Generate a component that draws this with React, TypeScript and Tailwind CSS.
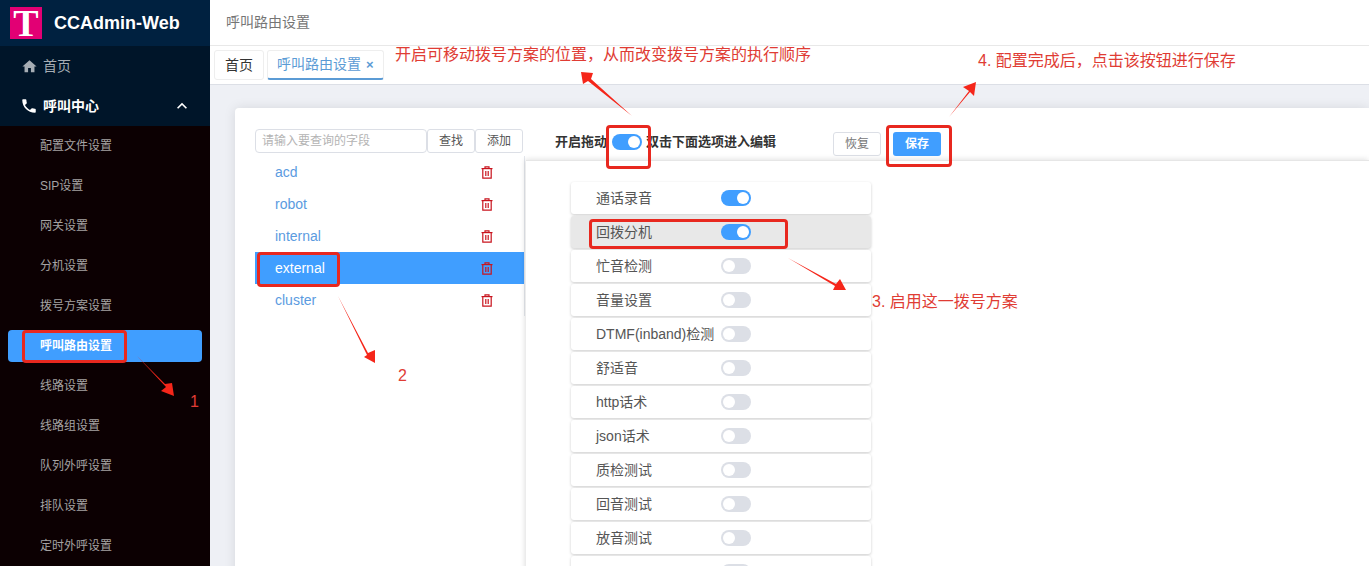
import React from "react";
import { MdHome, MdPhone, MdKeyboardArrowUp } from "react-icons/md";

const subMenus = [
  "配置文件设置",
  "SIP设置",
  "网关设置",
  "分机设置",
  "拨号方案设置",
  "呼叫路由设置",
  "线路设置",
  "线路组设置",
  "队列外呼设置",
  "排队设置",
  "定时外呼设置",
];

const routes = ["acd", "robot", "internal", "external", "cluster"];

const options = [
  { name: "通话录音", on: true },
  { name: "回拨分机", on: true, hover: true },
  { name: "忙音检测" },
  { name: "音量设置" },
  { name: "DTMF(inband)检测" },
  { name: "舒适音" },
  { name: "http话术" },
  { name: "json话术" },
  { name: "质检测试" },
  { name: "回音测试" },
  { name: "放音测试" },
  { name: "" },
];

const Switch = ({ on }: { on?: boolean }) => (
  <span
    className={`flex items-center w-[30px] h-[16px] shrink-0 rounded-full ${
      on ? "bg-[#409eff] justify-end" : "bg-[#dcdfe6] justify-start"
    }`}
  >
    <span className="w-[12px] h-[12px] mx-[2px] rounded-full bg-white" />
  </span>
);

const TrashIcon = () => (
  <svg width="12" height="13" viewBox="0 0 12 13" fill="none" stroke="#c9151e" strokeWidth="1.2">
    <path d="M0.5 2.6H11.5" />
    <path d="M4 2.4V0.9H8V2.4" />
    <path d="M1.8 2.6V12.2H10.2V2.6" />
    <path d="M4.8 5V10M7.2 5V10" />
  </svg>
);

// red marks drawn over the page
const Mark = ({ className }: { className: string }) => (
  <div className={`absolute border-[3px] border-[#e8281f] rounded-[4px] pointer-events-none ${className}`} />
);

const Note = ({ className, children }: { className: string; children: React.ReactNode }) => (
  <div className={`absolute text-[16px] leading-[22px] text-[#e03c34] whitespace-nowrap ${className}`}>{children}</div>
);

const App = () => {
  return (
    <div
      className="relative flex w-[1369px] h-[566px] overflow-hidden bg-[#eef0f5]"
      style={{ fontFamily: '"Liberation Sans", "Noto Sans CJK SC", sans-serif' }}
    >
      {/* sidebar */}
      <div className="w-[210px] shrink-0 flex flex-col bg-[#0c0002]">
        <div className="h-[46px] flex items-center pl-[10px] bg-[#002140]">
          <div
            className="w-[32px] h-[32px] bg-[#e20074] text-white text-[38px] leading-[33px] text-center font-bold"
            style={{ fontFamily: '"Liberation Serif", serif' }}
          >
            T
          </div>
          <span className="ml-[12px] text-[18px] font-bold text-white">CCAdmin-Web</span>
        </div>
        <div className="bg-[#001529]">
          <div className="h-[40px] flex items-center pl-[21px] text-[14px] text-[#a6adb4]">
            <MdHome className="w-[17px] h-[17px] mr-[5px] text-[#a6adb4]" />
            首页
          </div>
          <div className="h-[40px] flex items-center pl-[20px] pr-[18px] text-[14px] font-bold text-white">
            <MdPhone className="w-[18px] h-[18px] mr-[5px]" />
            <span className="flex-1">呼叫中心</span>
            <MdKeyboardArrowUp className="w-[20px] h-[20px]" />
          </div>
        </div>
        <div className="flex flex-col">
          {subMenus.map((m) =>
            m === "呼叫路由设置" ? (
              <div
                key={m}
                className="h-[32px] my-[4px] mx-[8px] pl-[32px] flex items-center rounded-[4px] bg-[#409eff] text-[12px] font-bold text-white"
              >
                {m}
              </div>
            ) : (
              <div key={m} className="h-[40px] pl-[40px] flex items-center text-[12px] text-[#a5a3a3]">
                {m}
              </div>
            )
          )}
        </div>
      </div>

      {/* main */}
      <div className="flex-1 min-w-0 flex flex-col">
        <div className="h-[46px] shrink-0 pl-[16px] flex items-center bg-white border-b border-[#e8e8e8] text-[14px] text-[#757575]">
          呼叫路由设置
        </div>
        <div className="h-[39px] shrink-0 pl-[4px] pt-[4px] flex gap-[3px] bg-white border-b border-[#dcdfe6] text-[14px]">
          <div className="w-[50px] h-[30px] flex items-center justify-center border border-[#eeeeee] rounded-[3px] text-[#333]">
            首页
          </div>
          <div className="w-[117px] h-[30px] pl-[9px] flex items-center border border-[#eeeeee] border-b-[2px] border-b-[#5b9bd5] rounded-[3px] text-[#5b9bd5]">
            呼叫路由设置
            <span className="ml-[5px] text-[13px] font-bold">×</span>
          </div>
        </div>

        <div className="flex-1 min-h-0 pl-[25px] pt-[23px]">
          <div className="h-[500px] flex flex-col bg-white rounded-l-[4px] shadow-[0_0_12px_rgba(0,0,0,0.1)]">
            <div className="flex h-[500px]">
              {/* route list */}
              <div className="w-[291px] shrink-0 pl-[20px] pt-[21px]">
                <div className="flex h-[24px]">
                  <div className="w-[172px] pl-[6px] flex items-center border border-[#dcdfe6] rounded-[4px] text-[12px] text-[#b4b4b4]">
                    请输入要查询的字段
                  </div>
                  <div className="w-[48px] flex items-center justify-center border border-[#dcdfe6] rounded-[3px] text-[12px] text-[#555]">
                    查找
                  </div>
                  <div className="w-[48px] flex items-center justify-center border border-[#dcdfe6] rounded-[3px] text-[12px] text-[#555]">
                    添加
                  </div>
                </div>
                <div className="mt-[3px] w-[270px] border-r border-[#e4e7ed]">
                  {routes.map((r) => (
                    <div
                      key={r}
                      className={`h-[32px] pl-[20px] pr-[31px] flex items-center justify-between text-[14px] ${
                        r === "external" ? "bg-[#409eff] text-white" : "text-[#5b9bdf]"
                      }`}
                    >
                      {r}
                      <TrashIcon />
                    </div>
                  ))}
                </div>
              </div>

              {/* editor */}
              <div className="flex-1 min-w-0 flex flex-col">
                <div className="h-[52px] shrink-0 pl-[29px] pt-[24px] flex items-start text-[13px] font-bold text-[#333]">
                  <div className="h-[20px] flex items-center">
                    <span className="w-[57px]">开启拖动</span>
                    <Switch on />
                    <span className="ml-[4px] w-[187px]">双击下面选项进入编辑</span>
                  </div>
                  <div className="w-[48px] h-[24px] flex items-center justify-center border border-[#dcdfe6] rounded-[3px] text-[12px] font-normal text-[#777]">
                    恢复
                  </div>
                  <div className="ml-[12px] w-[48px] h-[24px] flex items-center justify-center rounded-[3px] bg-[#409eff] text-[12px] text-white">
                    保存
                  </div>
                </div>
                <div className="flex-1 min-h-0 pl-[45px] pt-[21px] flex flex-col gap-[2px] border-t border-[#e6e6e6] overflow-hidden shadow-[0_-2px_6px_rgba(0,0,0,0.05),-2px_0_5px_rgba(0,0,0,0.08)]">
                  {options.map((o, i) => (
                    <div
                      key={i}
                      className={`w-[300px] h-[32px] shrink-0 pl-[25px] flex items-center rounded-[3px] text-[14px] text-[#555] shadow-[0_1px_3px_rgba(0,0,0,0.2)] ${
                        o.hover ? "bg-[#e8e8e8]" : "bg-white"
                      }`}
                    >
                      <span className="w-[125px] whitespace-nowrap">{o.name}</span>
                      <Switch on={o.on} />
                    </div>
                  ))}
                </div>
              </div>
            </div>
          </div>
        </div>
      </div>

      {/* annotations */}
      <svg className="absolute inset-0 pointer-events-none" width="1369" height="566" fill="#f5261a">
        <polygon points="137,356 165,384 172,383 174,396 161,391 166,387" />
        <polygon points="338,296 368,353 375,350 375,363 364,357 367,355" />
        <polygon points="788,258 836,284 840,279 846,290 833,290 835,286" />
        <polygon points="632,116 591,79 593,73 581,72 583,84 588,81" />
        <polygon points="949,117 969,91 963,87 976,82 974,96 970,92" />
      </svg>
      <Mark className="left-[22px] top-[330px] w-[105px] h-[33px]" />
      <Mark className="left-[257px] top-[252px] w-[83px] h-[35px]" />
      <Mark className="left-[606px] top-[125px] w-[45px] h-[44px]" />
      <Mark className="left-[886px] top-[125px] w-[66px] h-[42px]" />
      <Mark className="left-[589px] top-[219px] w-[199px] h-[30px]" />
      <Note className="left-[395px] top-[44px]">开启可移动拨号方案的位置，从而改变拨号方案的执行顺序</Note>
      <Note className="left-[978px] top-[50px]">4. 配置完成后，点击该按钮进行保存</Note>
      <Note className="left-[872px] top-[291px]">3. 启用这一拨号方案</Note>
      <Note className="left-[190px] top-[391px]">1</Note>
      <Note className="left-[398px] top-[365px]">2</Note>
    </div>
  );
};

export default App;
